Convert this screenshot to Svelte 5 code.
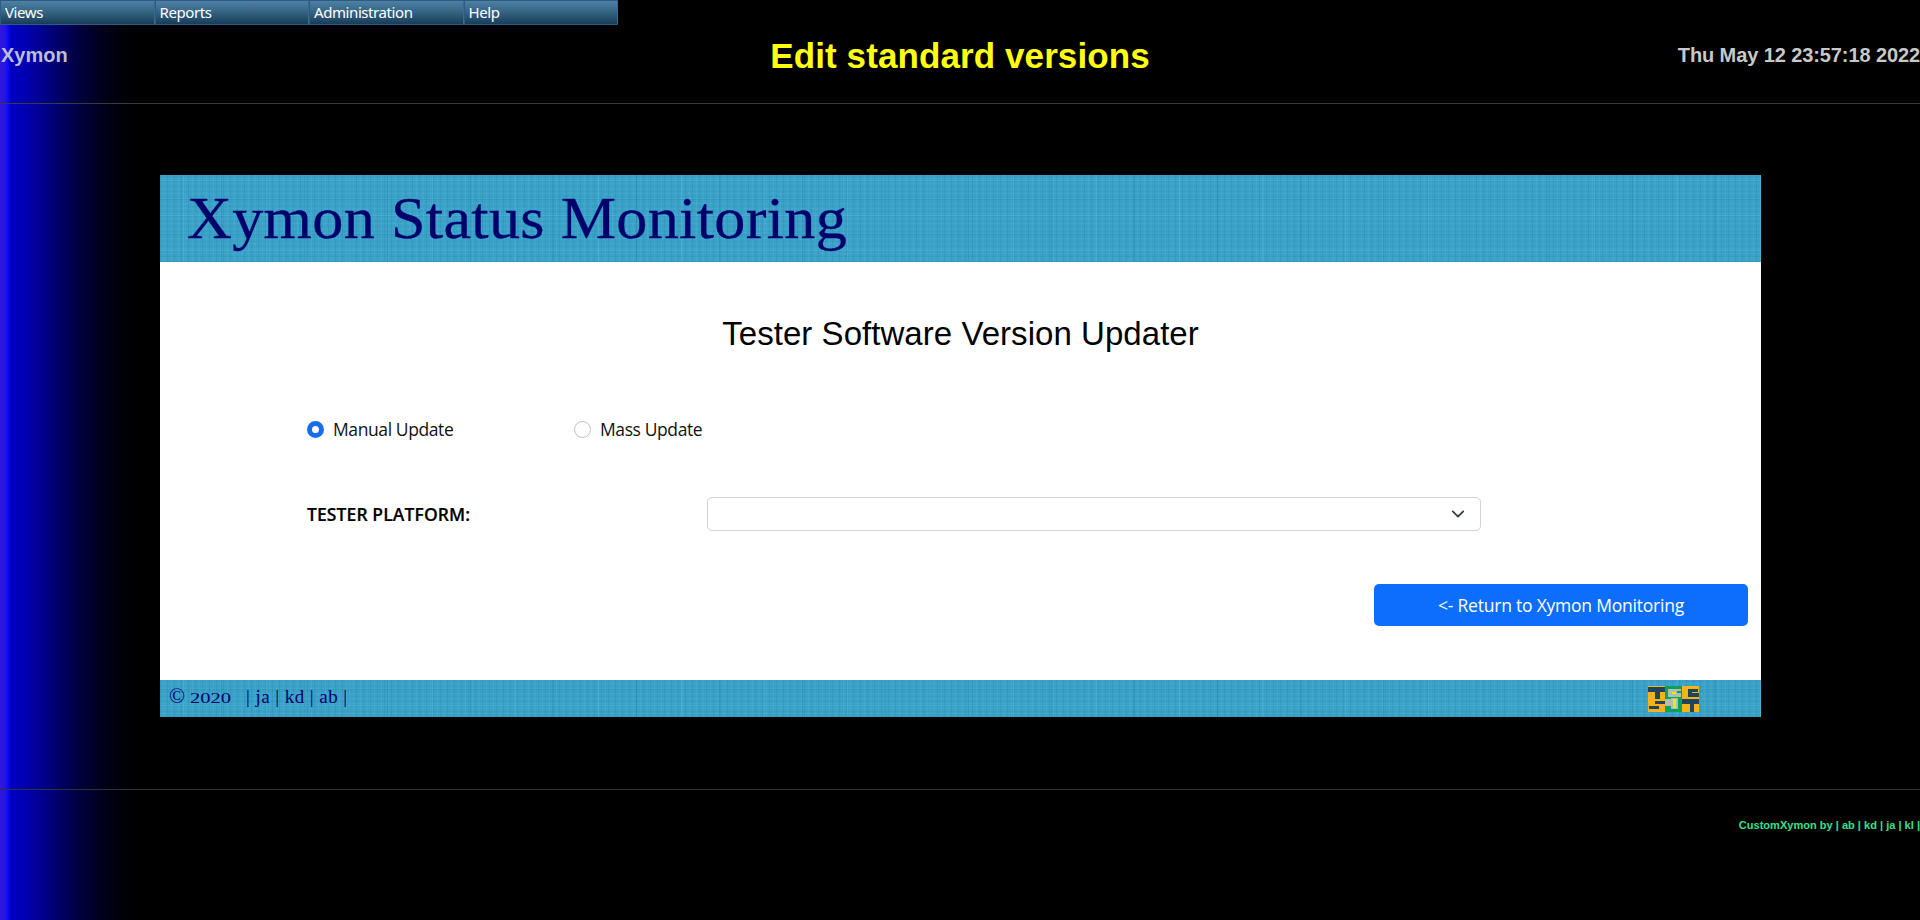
<script>
  const menu = ['Views', 'Reports', 'Administration', 'Help'];
  let mode = $state('manual');
</script>

<div class="page">
  <nav class="menu">
    {#each menu as item}<div class="item">{item}</div>{/each}
  </nav>
  <header class="top">
    <div class="brand">Xymon</div>
    <h1>Edit standard versions</h1>
    <div class="date">Thu May 12 23:57:18 2022</div>
  </header>
  <main class="panel">
    <div class="banner cloth"><span class="bannertext">Xymon Status Monitoring</span></div>
    <section class="body">
      <h2>Tester Software Version Updater</h2>
      <div class="radios">
        <label><input type="radio" value="manual" bind:group={mode} /><span>Manual Update</span></label>
        <label><input type="radio" value="mass" bind:group={mode} /><span>Mass Update</span></label>
      </div>
      <div class="platform">
        <span class="name">TESTER PLATFORM:</span>
        <div class="select">
          <svg width="14" height="14" viewBox="0 0 16 16"><path d="m2 5 6 6 6-6" fill="none" stroke="#343a40" stroke-width="2" stroke-linecap="round" stroke-linejoin="round" /></svg>
        </div>
      </div>
      <button><span>&lt;- Return to Xymon Monitoring</span></button>
    </section>
    <footer class="cloth">
      <div class="credits"><span class="copy">©</span><span class="year"><span class="digits">2020</span></span><span class="names">| ja | kd | ab |</span></div>
      <svg class="logo" width="51" height="26" viewBox="0 0 51 26">
        <path fill="#fbb216" d="M0 0h17v26H0zM34 0h17v26H34z" />
        <path fill="#09a05a" d="M17 0h17v26H17z" />
        <path fill="#1d4560" d="M0 1h17v5h-5v7H7V6H0zM7 15h10v3H7zM1 20h10v3H1zM40 3h10v3h-6v1h7v4H40zM34 13h17v5h-5v8h-4v-8h-8z" />
        <path fill="#b5bdae" d="M20 3h13v8H20zM17 13h6v7h-6zM23 12h7v11h-7z" />
        <path fill="#09a05a" d="M29 5h4v2h-4z" />
        <path fill="#e6ea20" d="M24 6h4v2h-4zM25 13h3v9h-3z" />
      </svg>
    </footer>
  </main>
  <div class="bottom">CustomXymon by | ab | kd | ja | kl |</div>
</div>

<style>
  :global(body) { margin: 0; background: #000; overflow: hidden; }
  * { box-sizing: border-box; }
  .page {
    height: 920px; width: 1920px; display: flex; flex-direction: column;
    font-family: "Liberation Sans", Arial, sans-serif;
    background: linear-gradient(90deg, #3018d8 0, #2814e4 5px, #0d08fa 8px, #0000c0 11px, #0000ac 28px, #000078 52px, #000044 76px, #00001e 100px, #00000e 116px, #000 134px);
  }
  .menu { display: flex; width: 618px; height: 25px; background: #2c5c80; padding: 1px 0 1px 1px; gap: 1px; flex: none; }
  .item {
    flex: 1; padding-left: 4px; color: #fff; font: 15px/22px "Noto Sans", sans-serif; letter-spacing: -.42px;
    background: linear-gradient(#4d80a4, #386685 45%, #173d58);
    border-right: 1px solid #386b90;
  }
  .top { height: 79px; flex: none; display: grid; grid-template-columns: 1fr auto 1fr; border-bottom: 1px solid #383b3b; font-weight: bold; color: #c8c8c8; font-size: 20px; }
  .brand { padding: 19px 0 0 1px; line-height: 23px; color: #bdbdd8; }
  .date { padding-top: 19px; line-height: 23px; text-align: right; letter-spacing: -.1px; }
  h1 { margin: 11px 0 0; font-size: 35px; line-height: 40px; color: #ffff10; letter-spacing: .1px; }
  .panel { margin: 71px 159px 0 160px; width: 1601px; height: 542px; flex: none; background: #fff; display: flex; flex-direction: column; }
  .cloth {
    background-color: #3aa2c8;
    background-image:
      repeating-linear-gradient(90deg, transparent 0 23px, rgba(150, 225, 240, .14) 23px 24px, transparent 24px 61px, rgba(0, 70, 110, .13) 61px 62px, transparent 62px 83px),
      repeating-linear-gradient(0deg, transparent 0 11px, rgba(150, 225, 240, .14) 11px 12px, transparent 12px 27px, rgba(0, 70, 110, .1) 27px 28px, transparent 28px 35px),
      repeating-linear-gradient(90deg, rgba(0, 70, 110, .09) 0 1px, transparent 1px 4px, rgba(150, 225, 240, .08) 4px 5px, transparent 5px 7px),
      repeating-linear-gradient(0deg, rgba(0, 70, 110, .05) 0 1px, transparent 1px 3px, rgba(150, 225, 240, .06) 3px 4px, transparent 4px 5px);
  }
  .banner { height: 87px; flex: none; padding-left: 27px; color: #00006c; white-space: nowrap; }
  .bannertext { display: inline-block; font: 59.5px/87px "Liberation Serif", serif; letter-spacing: .3px; transform: scaleX(1.045); transform-origin: 0 50%; -webkit-text-stroke: .3px #00006c; }
  .body { flex: 1; display: flex; flex-direction: column; font-family: "Open Sans", sans-serif; font-size: 17.5px; color: #111; }
  h2 { margin: 52px 0 0; text-align: center; font: 33px/40px "Liberation Sans", Arial, sans-serif; color: #000; letter-spacing: .05px; }
  .radios { margin: 62px 0 0 147px; display: flex; height: 26px; letter-spacing: -.4px; }
  label { width: 267px; display: flex; align-items: center; gap: 9px; white-space: nowrap; }
  label span { margin-top: -1px; }
  input { appearance: none; margin: 0; width: 17px; height: 17px; border-radius: 50%; border: 1px solid #bfbfbf; background: #fff; }
  input:checked { border: 5px solid #176bed; }
  .platform { margin: 55px 0 0 147px; display: flex; align-items: center; height: 34px; }
  .name { width: 400px; font-weight: 600; color: #000; letter-spacing: .1px; -webkit-text-stroke: .2px #000; }
  .select { width: 774px; height: 34px; border: 1px solid #ced4da; border-radius: 5px; display: flex; align-items: center; justify-content: flex-end; padding: 0 15px 0 0; }
  button { margin: 53px 13px 0 auto; width: 374px; height: 42px; flex: none; border: 0; border-radius: 5px; background: #0d6efd; color: #fff; font: 17.5px "Open Sans", sans-serif; letter-spacing: -.22px; padding: 0; }
  footer { height: 37px; flex: none; display: flex; justify-content: space-between; align-items: flex-start; padding: 6px 62px 0 9px; color: #00006c; }
  .credits { font: 19px/22px "Liberation Serif", serif; display: flex; white-space: pre; align-items: baseline; margin-top: -1px; }
  .copy { width: 21px; font-size: 21px; }
  .year { width: 56px; }
  .digits { display: inline-block; font-size: 15.5px; transform: scaleX(1.32); transform-origin: 0 50%; }
  .names { letter-spacing: .45px; }
  .bottom { margin-top: 72px; border-top: 1px solid #303232; padding-top: 28px; text-align: right; color: #38e08c; font-size: 11px; line-height: 14px; font-weight: bold; letter-spacing: .02px; }
</style>
